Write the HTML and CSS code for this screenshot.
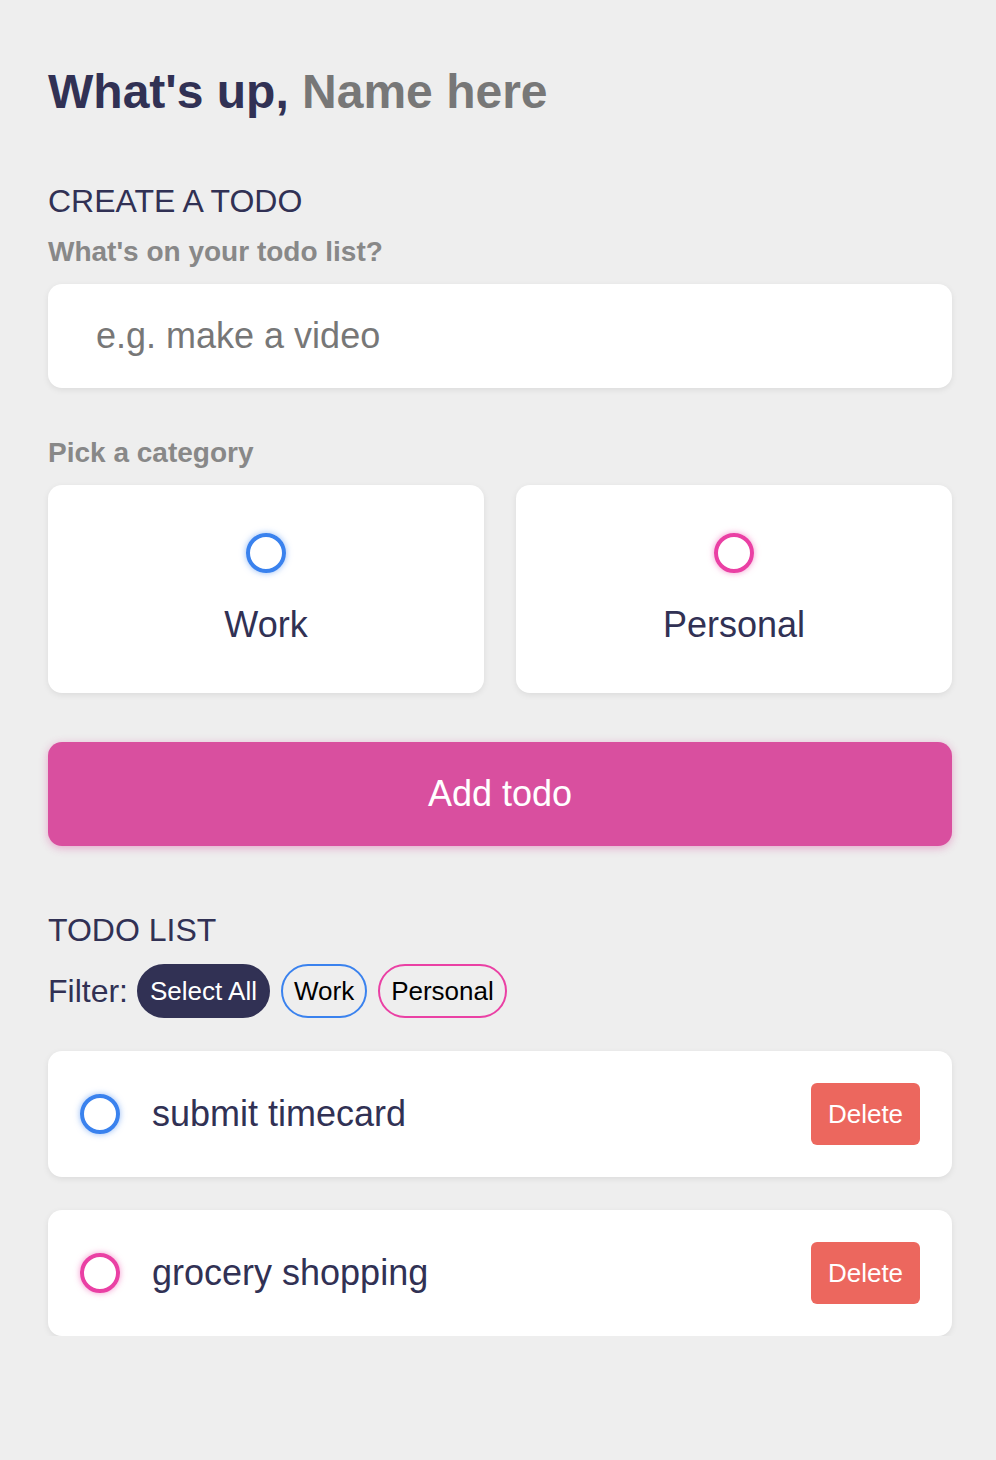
FILE: index.html
```html
<!DOCTYPE html>
<html>
<head>
<meta charset="utf-8">
<link rel="stylesheet" href="styles.css">
</head>
<body>
<main class="app">
  <section class="greeting">
    <h1 class="title">What's up, <span class="name">Name here</span></h1>
  </section>

  <section class="create">
    <h3 class="section-title">CREATE A TODO</h3>
    <form class="form">
      <h4 class="label">What's on your todo list?</h4>
      <input class="todo-input" type="text" placeholder="e.g. make a video">

      <h4 class="label label-cat">Pick a category</h4>
      <div class="options">
        <label class="option">
          <span class="bubble business"></span>
          <span class="option-text">Work</span>
        </label>
        <label class="option">
          <span class="bubble personal"></span>
          <span class="option-text">Personal</span>
        </label>
      </div>

      <button type="button" class="add-btn">Add todo</button>
    </form>
  </section>

  <section class="list-section">
    <h3 class="section-title">TODO LIST</h3>
    <div class="filter">
      <span class="filter-label">Filter:</span>
      <button type="button" class="pill pill-active">Select All</button>
      <button type="button" class="pill pill-work">Work</button>
      <button type="button" class="pill pill-personal">Personal</button>
    </div>
    <div class="todo-list">
      <div class="todo-item">
        <span class="bubble business"></span>
        <span class="todo-text">submit timecard</span>
        <button type="button" class="delete">Delete</button>
      </div>
      <div class="todo-item">
        <span class="bubble personal"></span>
        <span class="todo-text">grocery shopping</span>
        <button type="button" class="delete">Delete</button>
      </div>
    </div>
  </section>
</main>
</body>
</html>
```

FILE: styles.css
```css
* { box-sizing: border-box; margin: 0; padding: 0; }

html, body {
  background: #eeeeee;
}

body {
  font-family: "Liberation Sans", Arial, sans-serif;
  color: #313154;
}

.app {
  padding: 62px 44px 0 48px;
}

.title {
  font-size: 48px;
  font-weight: 700;
  line-height: 60px;
  color: #313154;
}

.name {
  color: #777777;
}

.create {
  margin-top: 61px;
}

.section-title {
  font-size: 32px;
  font-weight: 400;
  line-height: 36px;
  color: #313154;
}

.label {
  font-size: 28px;
  font-weight: 700;
  line-height: 30px;
  color: #888888;
  margin-top: 18px;
}

.label-cat {
  margin-top: 50px;
}

.todo-input {
  display: block;
  width: 100%;
  height: 104px;
  margin-top: 17px;
  border: none;
  outline: none;
  border-radius: 14px;
  background: #fff;
  box-shadow: 0 2px 6px rgba(0,0,0,0.08);
  padding: 0 48px;
  font-family: "Liberation Sans", Arial, sans-serif;
  font-size: 36px;
  color: #313154;
}

.todo-input::placeholder {
  color: #777;
}

.options {
  display: grid;
  grid-template-columns: 1fr 1fr;
  gap: 32px;
  margin-top: 17px;
}

.option {
  height: 208px;
  background: #fff;
  border-radius: 14px;
  box-shadow: 0 2px 6px rgba(0,0,0,0.08);
  display: flex;
  flex-direction: column;
  align-items: center;
  padding-top: 48px;
}

.bubble {
  display: block;
  width: 40px;
  height: 40px;
  border-radius: 50%;
  border: 4px solid #3a82ee;
  flex-shrink: 0;
}

.bubble.business {
  border-color: #3a82ee;
  box-shadow: 0 0 6px rgba(58,130,238,0.55);
}

.bubble.personal {
  border-color: #ea40a4;
  box-shadow: 0 0 6px rgba(234,64,164,0.55);
}

.option-text {
  margin-top: 30px;
  font-size: 36px;
  line-height: 44px;
  color: #313154;
}

.add-btn {
  display: block;
  width: 100%;
  height: 104px;
  margin-top: 49px;
  border: none;
  border-radius: 14px;
  background: #d94f9f;
  box-shadow: 0 2px 8px rgba(217,79,159,0.45);
  color: #fff;
  font-family: "Liberation Sans", Arial, sans-serif;
  font-size: 36px;
  cursor: pointer;
}

.list-section {
  margin-top: 66px;
}

.filter {
  display: flex;
  align-items: center;
  gap: 11px;
  margin-top: 16px;
}

.filter-label {
  font-size: 32px;
  color: #313154;
  margin-right: -2px;
}

.pill {
  height: 54px;
  border-radius: 27px;
  padding: 0 11px;
  font-family: "Liberation Sans", Arial, sans-serif;
  font-size: 26px;
  color: #000;
  background: transparent;
  border: 2px solid transparent;
}

.pill-active {
  background: #313154;
  border-color: #313154;
  color: #fff;
}

.pill-work {
  border-color: #3a82ee;
}

.pill-personal {
  border-color: #ea40a4;
}

.todo-list {
  display: flex;
  flex-direction: column;
  gap: 33px;
  margin-top: 33px;
}

.todo-item {
  height: 126px;
  background: #fff;
  border-radius: 14px;
  box-shadow: 0 2px 6px rgba(0,0,0,0.08);
  display: flex;
  align-items: center;
  padding: 0 32px;
}

.todo-text {
  flex: 1;
  margin-left: 32px;
  font-size: 36px;
  color: #313154;
}

.delete {
  width: 109px;
  height: 62px;
  border: none;
  border-radius: 6px;
  background: #ec675e;
  color: #fff;
  font-family: "Liberation Sans", Arial, sans-serif;
  font-size: 26px;
}
```
